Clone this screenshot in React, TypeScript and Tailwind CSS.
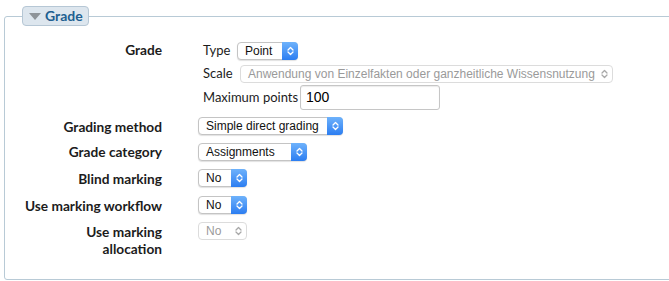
import React from "react";

type Kind = "normal" | "disabled" | "focus";

function Chev({ color }: { color: string }) {
  return (
    <svg width="7" height="10" viewBox="0 0 7 10">
      <path
        d="M1 4 L3.5 1.5 L6 4 M1 6 L3.5 8.5 L6 6"
        stroke={color}
        fill="none"
        strokeWidth="1.3"
        strokeLinecap="round"
        strokeLinejoin="round"
      />
    </svg>
  );
}

function Sel({ w, text, kind = "normal" }: { w: string; text: string; kind?: Kind }) {
  const disabled = kind === "disabled";
  return (
    <div
      className={
        "flex h-[18px] items-stretch rounded-[4px] border bg-white " +
        w +
        " " +
        (disabled
          ? "border-[#dcdcdc] text-[#9a9a9a]"
          : "border-[#c4c4c4] text-[#111] shadow-[0_1px_1px_rgba(0,0,0,0.12)]") +
        (kind === "focus" ? " shadow-[0_0_0_3px_rgba(120,170,240,0.45)] border-[#8db4ec]" : "")
      }
      style={{ fontFamily: '"Liberation Sans", Arial, sans-serif' }}
    >
      <div className="flex flex-1 items-center overflow-hidden whitespace-nowrap pl-[7px] text-[12px] leading-none">
        {text}
      </div>
      {disabled ? (
        <div className="flex w-[16px] items-center justify-center">
          <Chev color="#a8a8a8" />
        </div>
      ) : (
        <div className="-my-px -mr-px flex w-[16px] items-center justify-center rounded-r-[4px] bg-gradient-to-b from-[#6eb2fb] to-[#2b7df1]">
          <Chev color="#ffffff" />
        </div>
      )}
    </div>
  );
}

function Row({
  label,
  children,
  cls,
}: {
  label: React.ReactNode;
  children: React.ReactNode;
  cls: string;
}) {
  return (
    <div className={"flex " + cls}>
      <div className="w-[157px] shrink-0 text-right text-[13.7px] font-bold leading-[17px] text-[#1c1c1c]">
        {label}
      </div>
      <div className="ml-[36px]">{children}</div>
    </div>
  );
}

export default function App() {
  return (
    <div
      className="h-[281px] w-[669px] overflow-hidden bg-white pl-[4px] pt-[6px]"
      style={{ fontFamily: 'Lato, "Open Sans", sans-serif' }}
    >
      <fieldset className="h-[274px] w-[668px] rounded-[3px] border border-[#b8cad6] p-0">
        <legend className="ml-[17px] flex h-[20px] items-center rounded-[4px] border border-[#b6c7d5] bg-[#dde6ee] pl-[6px] pr-[5px]">
          <svg width="12" height="7" viewBox="0 0 12 7" className="mr-[4px] mt-[1px]">
            <path d="M0 0 L12 0 L6 7 Z" fill="#8e9499" />
          </svg>
          <span className="text-[14px] font-bold leading-none text-[#215f91]">Grade</span>
        </legend>

        <div className="pt-[15px]">
          <Row label="Grade" cls="">
            <div className="flex flex-col pl-[5px]">
              <div className="flex h-[20px] items-center text-[13px] text-[#1c1c1c]">
                <span className="w-[34px]">Type</span>
                <Sel w="w-[61px]" text="Point" />
              </div>
              <div className="mt-[4px] flex h-[18px] items-center text-[13px] text-[#1c1c1c]">
                <span className="w-[37px]">Scale</span>
                <Sel
                  w="w-[373px]"
                  text="Anwendung von Einzelfakten oder ganzheitliche Wissensnutzung"
                  kind="disabled"
                />
              </div>
              <div className="mt-[2px] flex h-[25px] items-center text-[13px] text-[#1c1c1c]">
                <span className="w-[97px]">Maximum points</span>
                <div
                  className="flex h-[25px] w-[140px] items-center rounded-[3px] border border-[#c6c6c6] bg-white pl-[5px] text-[14px] text-black shadow-[inset_0_1px_1px_rgba(0,0,0,0.08)]"
                  style={{ fontFamily: '"Liberation Sans", Arial, sans-serif' }}
                >
                  100
                </div>
              </div>
            </div>
          </Row>

          <Row label="Grading method" cls="mt-[7px] items-center h-[18px]">
            <Sel w="w-[145px]" text="Simple direct grading" />
          </Row>
          <Row label="Grade category" cls="mt-[7px] items-center h-[19px]">
            <Sel w="w-[109px]" text="Assignments" kind="focus" />
          </Row>
          <Row label="Blind marking" cls="mt-[8px] items-center h-[18px]">
            <Sel w="w-[49px]" text="No" />
          </Row>
          <Row label="Use marking workflow" cls="mt-[9px] items-center h-[18px]">
            <Sel w="w-[49px]" text="No" />
          </Row>
          <Row label={<>Use marking<br />allocation</>} cls="mt-[9px]">
            <div className="-mt-[1px]">
              <Sel w="w-[49px]" text="No" kind="disabled" />
            </div>
          </Row>
        </div>
      </fieldset>
    </div>
  );
}
